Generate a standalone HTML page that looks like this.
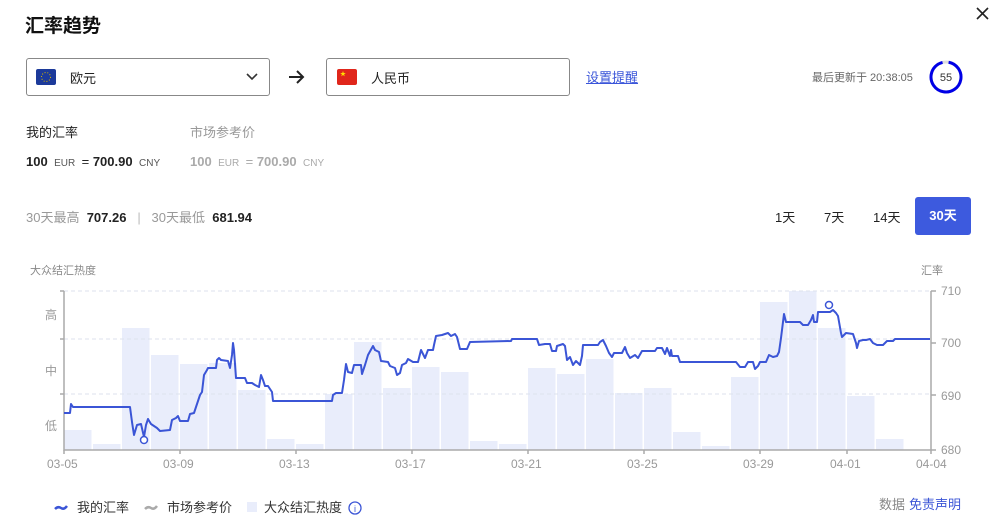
<!DOCTYPE html>
<html><head><meta charset="utf-8"><style>
*{margin:0;padding:0;box-sizing:border-box}
body{width:995px;height:523px;background:#fff;font-family:"Liberation Sans","Noto Sans CJK SC",sans-serif;position:relative;overflow:hidden;color:#222}
.a{position:absolute;white-space:nowrap}
.box{position:absolute;border:1px solid #888;border-radius:3px;height:38px;top:58px}
.g{color:#999}
</style></head><body>
<div class="a" style="left:25px;top:11px;font-size:19px;font-weight:bold;color:#111">汇率趋势</div>
<svg class="a" style="left:976px;top:7px" width="13" height="13"><path d="M1 1l11 11M12 1L1 12" stroke="#222" stroke-width="1.6"/></svg>

<div class="box" style="left:26px;width:244px"></div>
<svg class="a" style="left:36px;top:69px" width="20" height="17"><rect width="20" height="16" rx="2" fill="#1c3a9a"/><circle cx="10" cy="8" r="4.5" fill="none" stroke="#d8b900" stroke-dasharray="1 1.8" stroke-width="1"/></svg>
<div class="a" style="left:70px;top:68px;font-size:13px">欧元</div>
<svg class="a" style="left:246px;top:73px" width="12" height="8"><path d="M1 1l5 5 5-5" fill="none" stroke="#333" stroke-width="1.6"/></svg>
<svg class="a" style="left:288px;top:70px" width="18" height="14"><path d="M1 7h14M9 1l6 6-6 6" fill="none" stroke="#222" stroke-width="2"/></svg>
<div class="box" style="left:326px;width:244px"></div>
<svg class="a" style="left:337px;top:69px" width="20" height="17"><rect width="20" height="16" rx="2" fill="#e0261b"/><text x="3" y="7" font-size="6" fill="#ffde00">★</text></svg>
<div class="a" style="left:371px;top:68px;font-size:13px">人民币</div>
<div class="a" style="left:586px;top:67px;font-size:13px;color:#3a55d9;text-decoration:underline">设置提醒</div>
<div class="a" style="left:812px;top:69px;font-size:11px;color:#666">最后更新于 20:38:05</div>
<svg class="a" style="left:929px;top:60px" width="34" height="34"><circle cx="17" cy="17" r="15" fill="none" stroke="#ddd" stroke-width="3"/><circle cx="17" cy="17" r="15" fill="none" stroke="#0000e6" stroke-width="3" stroke-dasharray="88 100" transform="rotate(-80 17 17)"/><text x="17" y="21" font-size="11" text-anchor="middle" fill="#333" font-family="Liberation Sans">55</text></svg>

<div class="a" style="left:26px;top:122px;font-size:13px">我的汇率</div>
<div class="a g" style="left:190px;top:122px;font-size:13px">市场参考价</div>
<div class="a" style="left:26px;top:154px;font-size:13px"><b>100</b> <span style="font-size:10px;color:#555">&nbsp;EUR&nbsp;</span> = <b>700.90</b> <span style="font-size:10px;color:#555">&nbsp;CNY</span></div>
<div class="a" style="left:190px;top:154px;font-size:13px;color:#aaa"><b>100</b> <span style="font-size:10px">&nbsp;EUR&nbsp;</span> = <b>700.90</b> <span style="font-size:10px">&nbsp;CNY</span></div>
<div class="a" style="left:26px;top:207px;font-size:13px"><span class="g">30天最高</span>&nbsp; <b>707.26</b> &nbsp;<span style="color:#bbb">&nbsp;|&nbsp;</span>&nbsp; <span class="g">30天最低</span>&nbsp; <b>681.94</b></div>
<div class="a" style="left:775px;top:207px;font-size:13px">1天</div>
<div class="a" style="left:824px;top:207px;font-size:13px">7天</div>
<div class="a" style="left:873px;top:207px;font-size:13px">14天</div>
<div class="a" style="left:915px;top:197px;width:56px;height:38px;background:#3d5ade;border-radius:3px;color:#fff;font-size:13px;font-weight:bold;text-align:center;line-height:38px">30天</div>

<svg class="a" style="left:0;top:250px" width="995" height="273" font-family="Liberation Sans,Noto Sans CJK SC,sans-serif">
<g transform="translate(0,-250)">
<text x="30" y="274" font-size="11" fill="#888">大众结汇热度</text>
<text x="921" y="274" font-size="11" fill="#888">汇率</text>
<g fill="#e9edfb">
<rect x="64" y="430" width="27.5" height="20"/><rect x="93" y="444" width="27.5" height="6"/><rect x="122" y="328" width="27.5" height="122"/><rect x="151" y="355" width="27.5" height="95"/><rect x="180" y="364" width="27.5" height="86"/><rect x="209" y="363" width="27.5" height="87"/><rect x="238" y="390" width="27.5" height="60"/><rect x="267" y="439" width="27.5" height="11"/><rect x="296" y="444" width="27.5" height="6"/><rect x="325" y="394" width="27.5" height="56"/><rect x="354" y="342" width="27.5" height="108"/><rect x="383" y="388" width="27.5" height="62"/><rect x="412" y="367" width="27.5" height="83"/><rect x="441" y="372" width="27.5" height="78"/><rect x="470" y="441" width="27.5" height="9"/><rect x="499" y="444" width="27.5" height="6"/><rect x="528" y="368" width="27.5" height="82"/><rect x="557" y="374" width="27.5" height="76"/><rect x="586" y="359" width="27.5" height="91"/><rect x="615" y="393" width="27.5" height="57"/><rect x="644" y="388" width="27.5" height="62"/><rect x="673" y="432" width="27.5" height="18"/><rect x="702" y="446" width="27.5" height="4"/><rect x="731" y="377" width="27.5" height="73"/><rect x="760" y="302" width="27.5" height="148"/><rect x="789" y="291" width="27.5" height="159"/><rect x="818" y="328" width="27.5" height="122"/><rect x="847" y="396" width="27.5" height="54"/><rect x="876" y="439" width="27.5" height="11"/>
</g>
<g stroke="#dde2ee" stroke-dasharray="4 3"><line x1="64" y1="291" x2="931" y2="291"/><line x1="64" y1="339" x2="931" y2="339"/><line x1="64" y1="394" x2="931" y2="394"/></g>
<g stroke="#aaa" stroke-width="1.5" fill="none"><path d="M64 291V450H931V291"/><path d="M60 291h4M60 339h4M60 394h4M64 450v4M180 450v4M296 450v4M412 450v4M528 450v4M644 450v4M760 450v4M847 450v4M931 450v4M931 291h5M931 343h5M931 395h5M931 450h5"/></g>
<g font-size="12" fill="#999"><text x="45" y="319">高</text><text x="45" y="375">中</text><text x="45" y="430">低</text>
<text x="47" y="468">03-05</text><text x="163" y="468">03-09</text><text x="279" y="468">03-13</text><text x="395" y="468">03-17</text><text x="511" y="468">03-21</text><text x="627" y="468">03-25</text><text x="743" y="468">03-29</text><text x="830" y="468">04-01</text><text x="916" y="468">04-04</text>
<text x="941" y="295">710</text><text x="941" y="347">700</text><text x="941" y="400">690</text><text x="941" y="454">680</text></g>
<polyline fill="none" stroke="#3b55d6" stroke-width="2" stroke-linejoin="round" points="64,413 70,413 71,404 73,407 130,407 132,422 134,435 137,425 141,424 144,437 146,425 148,419 151,424 157,428 160,431 170,430 172,420 176,418 178,416 180,421 188,421 190,414 194,413 197,404 200,395 202,392 204,375 207,370 208,368 216,368 217,360 219,358 221,360 228,361 230,368 232,355 233,343 234,350 236,378 245,378 247,383 252,383 255,385 259,387 261,375 263,380 265,386 268,386 272,392 273,401 332,401 333,395 336,393 342,393 344,380 346,364 348,372 352,373 354,365 361,365 362,374 365,365 368,355 373,346 375,350 379,352 381,361 388,362 390,366 395,368 397,375 400,373 402,365 406,363 408,359 413,362 418,362 421,350 425,358 428,350 433,350 434,345 436,336 442,335 448,333 451,336 455,334 457,337 460,349 467,349 470,342 511,341 512,339 537,339 539,345 545,344 550,344 552,351 556,351 557,346 563,344 565,346 567,360 570,357 573,365 576,361 580,365 582,356 583,345 598,345 600,342 603,340 606,346 609,353 612,357 614,353 622,353 625,347 627,353 630,358 635,355 638,358 642,351 655,351 657,348 662,348 665,354 667,348 670,356 671,350 672,356 678,356 680,362 736,362 740,367 745,367 748,362 753,362 755,369 758,366 760,362 766,362 769,355 773,357 777,356 779,352 781,338 784,314 786,322 800,322 803,325 808,325 811,320 813,315 814,322 817,322 818,312 830,312 833,310 836,313 838,316 841,333 842,337 846,333 853,334 856,343 857,348 859,341 863,340 866,340 870,339 873,343 877,345 883,345 887,341 893,341 895,339 930,339"/>
<circle cx="144" cy="440" r="3.5" fill="#fff" stroke="#3b55d6" stroke-width="1.5"/><circle cx="829" cy="305" r="3.5" fill="#fff" stroke="#3b55d6" stroke-width="1.5"/>
<path d="M55 509q3-3 6-1t6-2" stroke="#3b55d6" stroke-width="2.5" fill="none"/>
<text x="77" y="512" font-size="13" fill="#333">我的汇率</text>
<path d="M145 509q3-3 6-1t6-2" stroke="#aaa" stroke-width="2.5" fill="none"/>
<text x="167" y="512" font-size="13" fill="#333">市场参考价</text>
<rect x="247" y="502" width="10" height="10" fill="#e9edfb"/>
<text x="264" y="512" font-size="13" fill="#333">大众结汇热度</text>
<circle cx="355" cy="508" r="6" fill="none" stroke="#3b55d6" stroke-width="1.3"/><text x="355" y="512" font-size="9" fill="#3b55d6" text-anchor="middle">i</text>
<text x="879" y="509" font-size="13" fill="#888">数据</text><text x="909" y="509" font-size="13" fill="#3b55d6">免责声明</text>
</g></svg>
</body></html>
